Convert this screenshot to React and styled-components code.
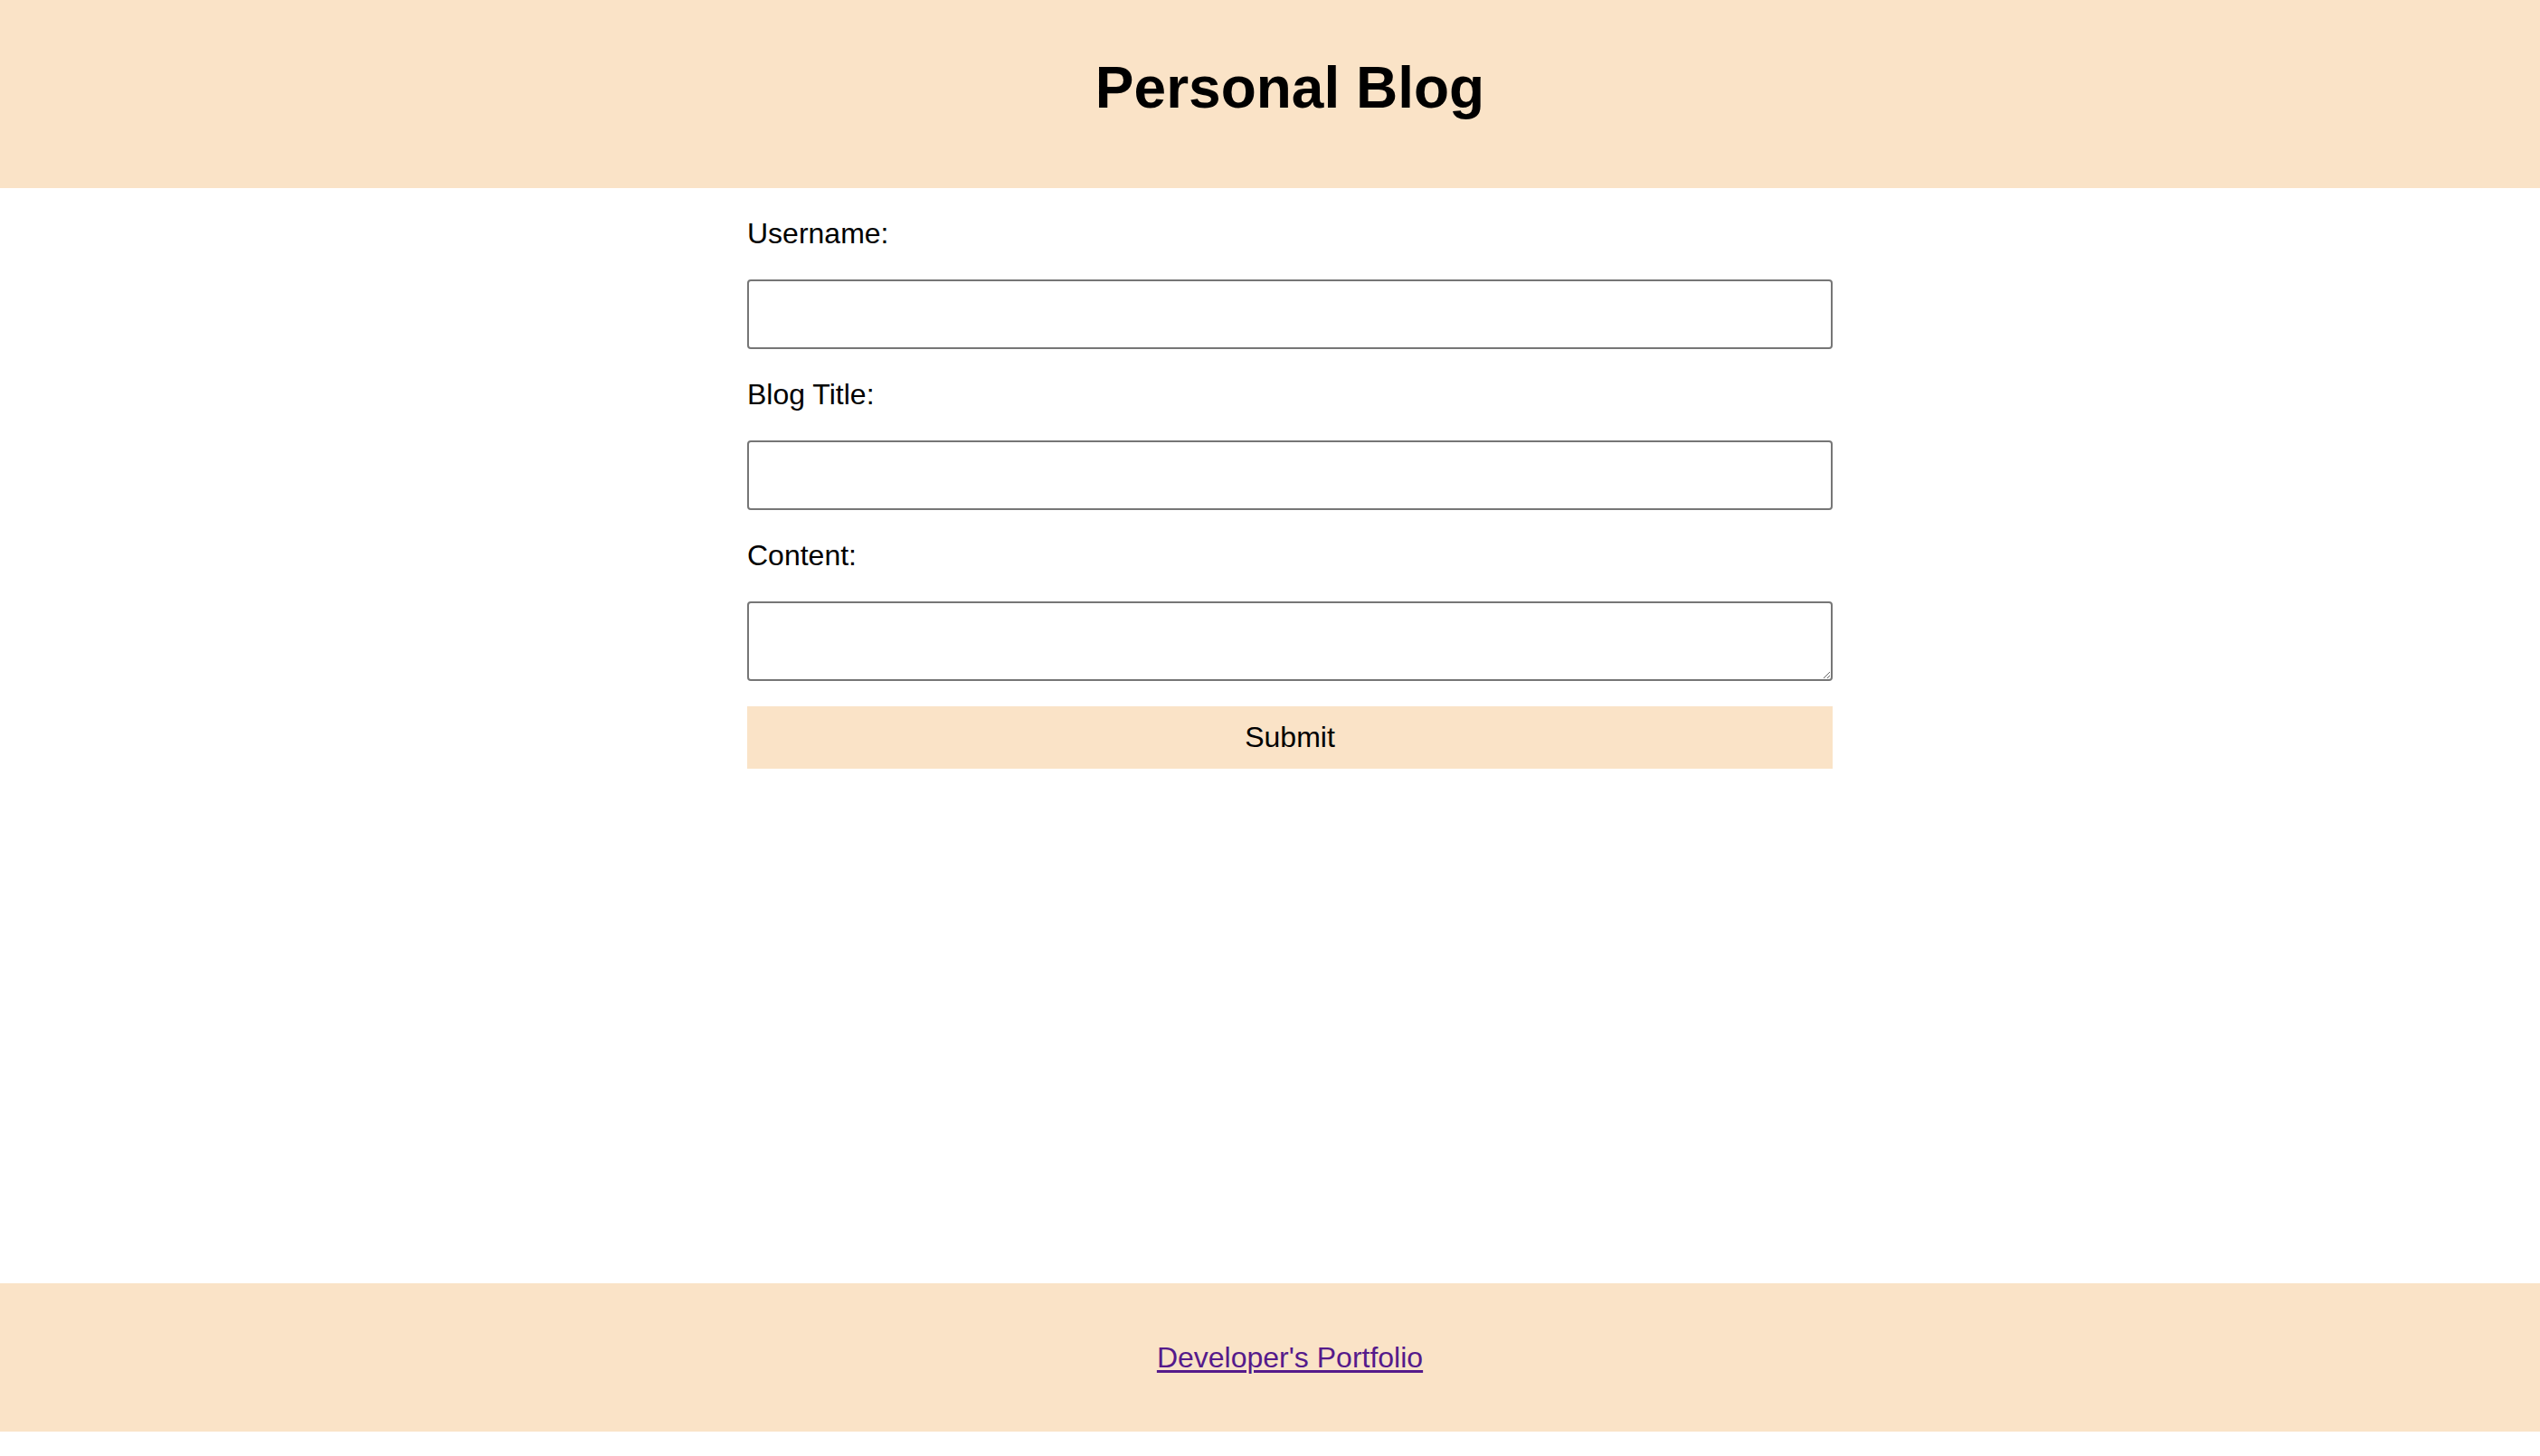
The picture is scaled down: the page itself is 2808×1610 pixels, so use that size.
import styled, { createGlobalStyle } from "styled-components";

const GlobalStyle = createGlobalStyle`
  * {
    box-sizing: border-box;
  }
  body {
    margin: 0;
    background: #ffffff;
    font-family: "Liberation Sans", Arial, sans-serif;
    color: #000000;
  }
`;

const PEACH = "#fae3c7";

const Page = styled.div`
  display: flex;
  flex-direction: column;
`;

const Header = styled.header`
  background: ${PEACH};
  height: 208px;
  padding: 61px 0 75px 44px;
  text-align: center;
`;

const Title = styled.h1`
  margin: 0;
  font-size: 64px;
  line-height: 72px;
  font-weight: 700;
`;

const Main = styled.main`
  height: 1211px;
  padding-left: 44px;
  display: flex;
  justify-content: center;
`;

const Form = styled.form`
  width: 1200px;
  display: flex;
  flex-direction: column;
`;

const Label = styled.label`
  display: block;
  font-size: 32px;
  line-height: 36px;
  margin: 32px 0 33px;
`;

const fieldBase = `
  width: 100%;
  border: 2px solid #767676;
  border-radius: 4px;
  background: #ffffff;
  font-family: "Liberation Sans", Arial, sans-serif;
  font-size: 32px;
  padding: 4px 8px;
  outline: none;
`;

const Input = styled.input`
  ${fieldBase}
  height: 77px;
`;

const TextArea = styled.textarea`
  ${fieldBase}
  height: 88px;
  resize: vertical;
  display: block;
`;

const Submit = styled.button`
  margin-top: 28px;
  width: 100%;
  height: 69px;
  border: none;
  background: ${PEACH};
  font-family: "Liberation Sans", Arial, sans-serif;
  font-size: 32px;
  color: #000000;
  cursor: pointer;
`;

const Footer = styled.footer`
  background: ${PEACH};
  height: 164px;
  padding: 64px 0 64px 44px;
  text-align: center;
`;

const FooterLink = styled.a`
  font-size: 32px;
  line-height: 36px;
  color: #551a8b;
  text-decoration: underline;
  text-underline-offset: 3px;
  text-decoration-thickness: 3px;
`;

const App = () => {
  return (
    <Page>
      <GlobalStyle />
      <Header>
        <Title>Personal Blog</Title>
      </Header>
      <Main>
        <Form onSubmit={(e) => e.preventDefault()}>
          <Label htmlFor="username">Username:</Label>
          <Input id="username" type="text" />
          <Label htmlFor="title">Blog Title:</Label>
          <Input id="title" type="text" />
          <Label htmlFor="content">Content:</Label>
          <TextArea id="content" />
          <Submit type="submit">Submit</Submit>
        </Form>
      </Main>
      <Footer>
        <FooterLink href="#portfolio">Developer's Portfolio</FooterLink>
      </Footer>
    </Page>
  );
};

export default App;
